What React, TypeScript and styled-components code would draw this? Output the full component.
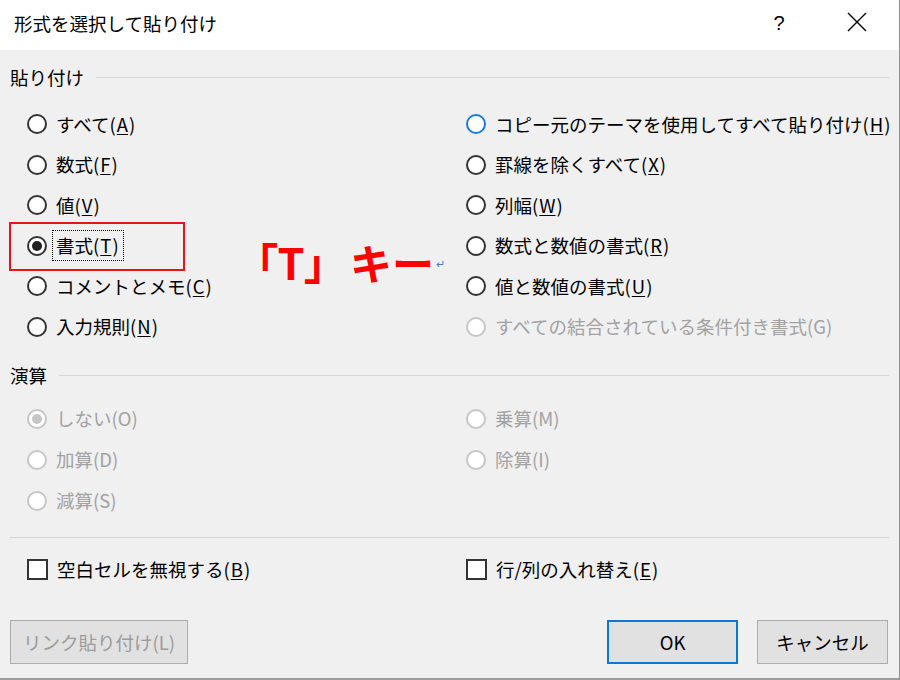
import React from 'react';
import styled, { createGlobalStyle } from 'styled-components';

const GlobalStyle = createGlobalStyle`
  body {
    margin: 0;
    background: #ffffff;
    font-family: "Noto Sans CJK JP", "Noto Sans", sans-serif;
    color: #000;
  }
`;

type Option = { text: string; key?: string; checked?: boolean; disabled?: boolean; hover?: boolean; focus?: boolean };

const pasteOptions: Option[] = [
  { text: 'すべて', key: 'A' },
  { text: '数式', key: 'F' },
  { text: '値', key: 'V' },
  { text: '書式', key: 'T', checked: true, focus: true },
  { text: 'コメントとメモ', key: 'C' },
  { text: '入力規則', key: 'N' },
  { text: 'コピー元のテーマを使用してすべて貼り付け', key: 'H', hover: true },
  { text: '罫線を除くすべて', key: 'X' },
  { text: '列幅', key: 'W' },
  { text: '数式と数値の書式', key: 'R' },
  { text: '値と数値の書式', key: 'U' },
  { text: 'すべての結合されている条件付き書式(G)', disabled: true },
];

const opOptions: Option[] = [
  { text: 'しない(O)', disabled: true, checked: true },
  { text: '加算(D)', disabled: true },
  { text: '減算(S)', disabled: true },
  { text: '乗算(M)', disabled: true },
  { text: '除算(I)', disabled: true },
];

const App = () => {
  return (
    <Window>
      <GlobalStyle />
      <TitleBar>
        <Title>形式を選択して貼り付け</Title>
        <HelpButton>?</HelpButton>
        <CloseButton>
          <svg width="20" height="20" viewBox="0 0 20 20">
            <path d="M1 1 L19 19 M19 1 L1 19" stroke="#000" strokeWidth="1.4" />
          </svg>
        </CloseButton>
      </TitleBar>
      <Body>
        <GroupHeader>
          <GroupLabel>貼り付け</GroupLabel>
          <GroupLine />
        </GroupHeader>
        <OptionGrid $rows={6} $rowHeight={40.5} style={{ marginTop: 16 }}>
          {pasteOptions.map((o) => (
            <RadioRow key={o.text} option={o} />
          ))}
        </OptionGrid>
        <GroupHeader style={{ marginTop: 17 }}>
          <GroupLabel>演算</GroupLabel>
          <GroupLine />
        </GroupHeader>
        <OptionGrid $rows={3} $rowHeight={41} style={{ marginTop: 12 }}>
          {opOptions.map((o) => (
            <RadioRow key={o.text} option={o} />
          ))}
        </OptionGrid>
        <Separator />
        <CheckGrid>
          <CheckRow>
            <CheckBox />
            <span>
              空白セルを無視する(<Key>B</Key>)
            </span>
          </CheckRow>
          <CheckRow>
            <CheckBox />
            <span>
              行/列の入れ替え(<Key>E</Key>)
            </span>
          </CheckRow>
        </CheckGrid>
        <ButtonRow>
          <Button $disabled $width={178}>リンク貼り付け(L)</Button>
          <Button $primary $width={131} style={{ marginLeft: 'auto' }}>
            OK
          </Button>
          <Button $width={131}>キャンセル</Button>
        </ButtonRow>
      </Body>

      <RedFrame />
      <Annotation>
        <Bracket>「T」</Bracket>
        <AnnotationKey>キー</AnnotationKey>
        <ReturnMark>↵</ReturnMark>
      </Annotation>
    </Window>
  );
};

const RadioRow = ({ option }: { option: Option }) => (
  <Row $disabled={option.disabled}>
    <Radio $checked={option.checked} $disabled={option.disabled} $hover={option.hover} />
    <RowLabel $focus={option.focus}>
      {option.text}
      {option.key && (
        <>
          (<Key>{option.key}</Key>)
        </>
      )}
    </RowLabel>
  </Row>
);

const Window = styled.div`
  position: relative;
  width: 900px;
  height: 680px;
  box-sizing: border-box;
  border-right: 1px solid #8f8f8f;
  display: flex;
  flex-direction: column;
  overflow: hidden;
`;

const TitleBar = styled.div`
  height: 50px;
  flex: none;
  background: #ffffff;
  display: flex;
  align-items: center;
  padding-left: 14px;
  font-size: 18.5px;
`;

const Title = styled.div`
  flex: 1;
  margin-top: -4px;
`;

const HelpButton = styled.div`
  width: 60px;
  text-align: center;
  font-size: 20px;
  margin-right: 18px;
  margin-top: -4px;
  font-family: "Liberation Sans", sans-serif;
`;

const CloseButton = styled.div`
  width: 60px;
  display: flex;
  justify-content: center;
  margin-right: 12px;
  margin-top: -6px;
`;

const Body = styled.div`
  flex: 1;
  background: #f0f0f0;
  border-bottom: 2px solid #9c9c9c;
  padding: 16px 10px 0 10px;
  display: flex;
  flex-direction: column;
  font-size: 18.5px;
`;

const GroupHeader = styled.div`
  height: 22px;
  display: flex;
  align-items: center;
  gap: 12px;
`;

const GroupLabel = styled.div`
  font-size: 18.5px;
  line-height: 22px;
`;

const GroupLine = styled.div`
  flex: 1;
  height: 1px;
  background: #d6d6d6;
  margin-top: 1px;
`;

const OptionGrid = styled.div<{ $rows: number; $rowHeight: number }>`
  display: grid;
  grid-template-columns: 439px 1fr;
  grid-template-rows: repeat(${(p) => p.$rows}, ${(p) => p.$rowHeight}px);
  grid-auto-flow: column;
  padding-left: 17px;
`;

const Row = styled.div<{ $disabled?: boolean }>`
  display: flex;
  align-items: center;
  gap: 5px;
  color: ${(p) => (p.$disabled ? '#a2a2a2' : '#000')};
  white-space: nowrap;
`;

const Radio = styled.span<{ $checked?: boolean; $disabled?: boolean; $hover?: boolean }>`
  width: 20px;
  height: 20px;
  box-sizing: border-box;
  border-radius: 50%;
  background: #ffffff;
  flex: none;
  border: 2px solid ${(p) => (p.$disabled ? '#c6c6c6' : p.$hover ? '#1a7ad8' : '#333333')};
  display: flex;
  align-items: center;
  justify-content: center;
  &::after {
    content: '';
    display: ${(p) => (p.$checked ? 'block' : 'none')};
    width: 10px;
    height: 10px;
    border-radius: 50%;
    background: ${(p) => (p.$disabled ? '#c6c6c6' : '#1f1f1f')};
  }
`;

const RowLabel = styled.span<{ $focus?: boolean }>`
  padding: 2px 4px 2px 3px;
  line-height: 25px;
  border: 1px dotted ${(p) => (p.$focus ? '#000' : 'transparent')};
`;

const Key = styled.span`
  text-decoration: underline;
  text-underline-offset: 2px;
  padding: 0 1px;
`;

const Separator = styled.div`
  height: 1px;
  background: #d6d6d6;
  margin: 16px 0 0 0;
`;

const CheckGrid = styled.div`
  display: grid;
  grid-template-columns: 439px 1fr;
  padding-left: 17px;
  margin-top: 11px;
  height: 40px;
`;

const CheckRow = styled.div`
  display: flex;
  align-items: center;
  gap: 9px;
  white-space: nowrap;
`;

const CheckBox = styled.span`
  width: 21px;
  height: 21px;
  box-sizing: border-box;
  border: 2px solid #333333;
  background: #ffffff;
  flex: none;
`;

const ButtonRow = styled.div`
  display: flex;
  gap: 19px;
  margin-top: 31px;
  padding-right: 1px;
`;

const Button = styled.div<{ $primary?: boolean; $disabled?: boolean; $width: number }>`
  width: ${(p) => p.$width}px;
  height: 44px;
  box-sizing: border-box;
  background: #e1e1e1;
  border: ${(p) => (p.$primary ? '2px solid #0a78d6' : '1px solid #adadad')};
  color: ${(p) => (p.$disabled ? '#9c9c9c' : '#000')};
  display: flex;
  align-items: center;
  justify-content: center;
  font-size: 18.5px;
`;

const RedFrame = styled.div`
  position: absolute;
  left: 9px;
  top: 222px;
  width: 176px;
  height: 49px;
  box-sizing: border-box;
  border: 2px solid #e8141b;
`;

const Annotation = styled.div`
  position: absolute;
  left: 256px;
  top: 236px;
  display: flex;
  align-items: baseline;
  font-size: 43px;
  line-height: 50px;
  font-weight: 700;
  color: #ff0000;
  white-space: nowrap;
`;

const Bracket = styled.span`
  font-feature-settings: "palt";
`;

const AnnotationKey = styled.span`
  margin-left: 24px;
  font-size: 42px;
`;

const ReturnMark = styled.span`
  font-size: 11px;
  font-weight: 400;
  color: #3f7fd6;
  margin-left: 2px;
  position: relative;
  top: -12px;
`;

export default App;
